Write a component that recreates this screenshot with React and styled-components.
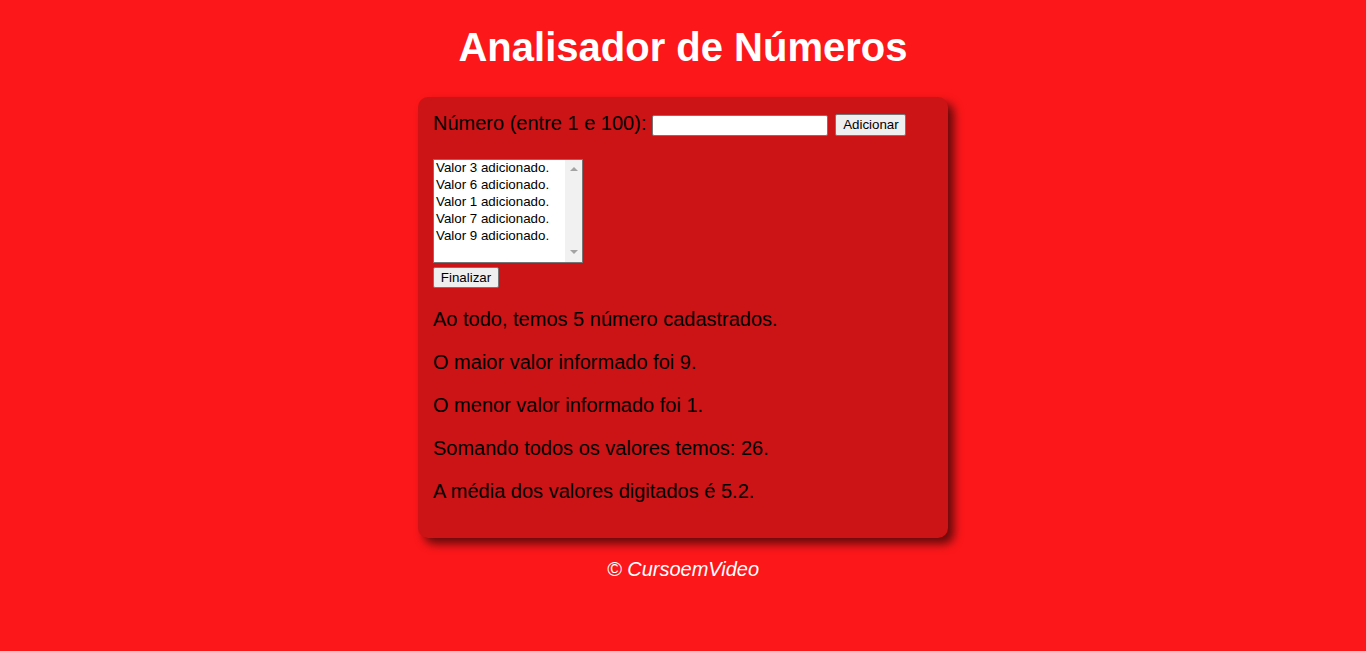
import styled, { createGlobalStyle } from 'styled-components';

const VALUES = [3, 6, 1, 7, 9];

const GlobalStyle = createGlobalStyle`
  html, body {
    margin: 0;
    padding: 0;
  }
  body {
    background: #fc171a;
    font: normal 20px 'Liberation Sans', Arial, sans-serif;
  }
`;

function App() {
  const total = VALUES.reduce((acc, v) => acc + v, 0);
  const media = total / VALUES.length;

  return (
    <>
      <GlobalStyle />
      <Header>
        <Title>Analisador de Números</Title>
      </Header>
      <Card>
        <InputRow>
          <Label>Número (entre 1 e 100):</Label>
          <NumberInput type="number" />
          <Button $w={71} $h={22} $top={2}>Adicionar</Button>
        </InputRow>
        <ListBox>
          <ListItems>
            {VALUES.map((v) => (
              <ListItem key={v}>Valor {v} adicionado.</ListItem>
            ))}
          </ListItems>
          <ScrollTrack>
            <Arrow $dir="up" />
            <Arrow $dir="down" />
          </ScrollTrack>
        </ListBox>
        <Button $w={66} $h={21} $top={4}>Finalizar</Button>
        <Result>
          <p>Ao todo, temos {VALUES.length} número cadastrados.</p>
          <p>O maior valor informado foi {Math.max(...VALUES)}.</p>
          <p>O menor valor informado foi {Math.min(...VALUES)}.</p>
          <p>Somando todos os valores temos: {total}.</p>
          <p>A média dos valores digitados é {media}.</p>
        </Result>
      </Card>
      <Footer>
        <p>© CursoemVideo</p>
      </Footer>
    </>
  );
}

const Header = styled.header`
  color: white;
  text-align: center;
`;

const Title = styled.h1`
  margin: 0;
  padding: 24px 0 27px;
  font-size: 40px;
  font-weight: bold;
  line-height: 46px;
`;

const Card = styled.section`
  width: 500px;
  margin: 0 auto;
  padding: 15px;
  background: #cc1316;
  border-radius: 10px;
  box-shadow: 6px 6px 10px rgba(0, 0, 0, 0.6);
  color: black;
`;

const InputRow = styled.div`
  display: flex;
  align-items: flex-start;
  height: 23px;
  line-height: 23px;
`;

const Label = styled.span`
  margin-right: 6px;
`;

const NumberInput = styled.input`
  box-sizing: border-box;
  width: 176px;
  height: 21px;
  margin: 3px 7px 0 0;
  padding: 1px 2px;
  border: 1px solid #767676;
  border-radius: 2px;
  background: white;
  font: 13.33px 'Liberation Sans', Arial, sans-serif;
  outline: none;
  -moz-appearance: textfield;
  &::-webkit-inner-spin-button,
  &::-webkit-outer-spin-button {
    -webkit-appearance: none;
    margin: 0;
  }
`;

const Button = styled.button`
  box-sizing: border-box;
  display: block;
  width: ${(p) => p.$w}px;
  height: ${(p) => p.$h}px;
  margin-top: ${(p) => p.$top}px;
  padding: 0;
  border: 1px solid #767676;
  border-radius: 2px;
  background: #efefef;
  color: black;
  font: 13.33px 'Liberation Sans', Arial, sans-serif;
  line-height: 1;
`;

const ListBox = styled.div`
  box-sizing: border-box;
  display: flex;
  width: 150px;
  height: 104px;
  margin-top: 24px;
  border: 1px solid #767676;
  background: white;
`;

const ListItems = styled.div`
  flex: 1;
`;

const ListItem = styled.div`
  height: 17px;
  padding-left: 2px;
  font: 13.33px 'Liberation Sans', Arial, sans-serif;
  line-height: 15.4px;
  color: black;
  white-space: nowrap;
`;

const ScrollTrack = styled.div`
  display: flex;
  flex-direction: column;
  justify-content: space-between;
  align-items: center;
  width: 17px;
  padding: 7px 0 8px;
  box-sizing: border-box;
  background: #f1f1f1;
`;

const Arrow = styled.span`
  width: 0;
  height: 0;
  border-left: 4px solid transparent;
  border-right: 4px solid transparent;
  ${(p) =>
    p.$dir === 'up'
      ? 'border-bottom: 4px solid #a3a3a3;'
      : 'border-top: 4px solid #a3a3a3;'}
`;

const Result = styled.div`
  p {
    margin: 20px 0;
    line-height: 23px;
  }
`;

const Footer = styled.footer`
  color: white;
  text-align: center;
  font-style: italic;
  p {
    margin: 20px 0;
    line-height: 23px;
  }
`;

export default App;
